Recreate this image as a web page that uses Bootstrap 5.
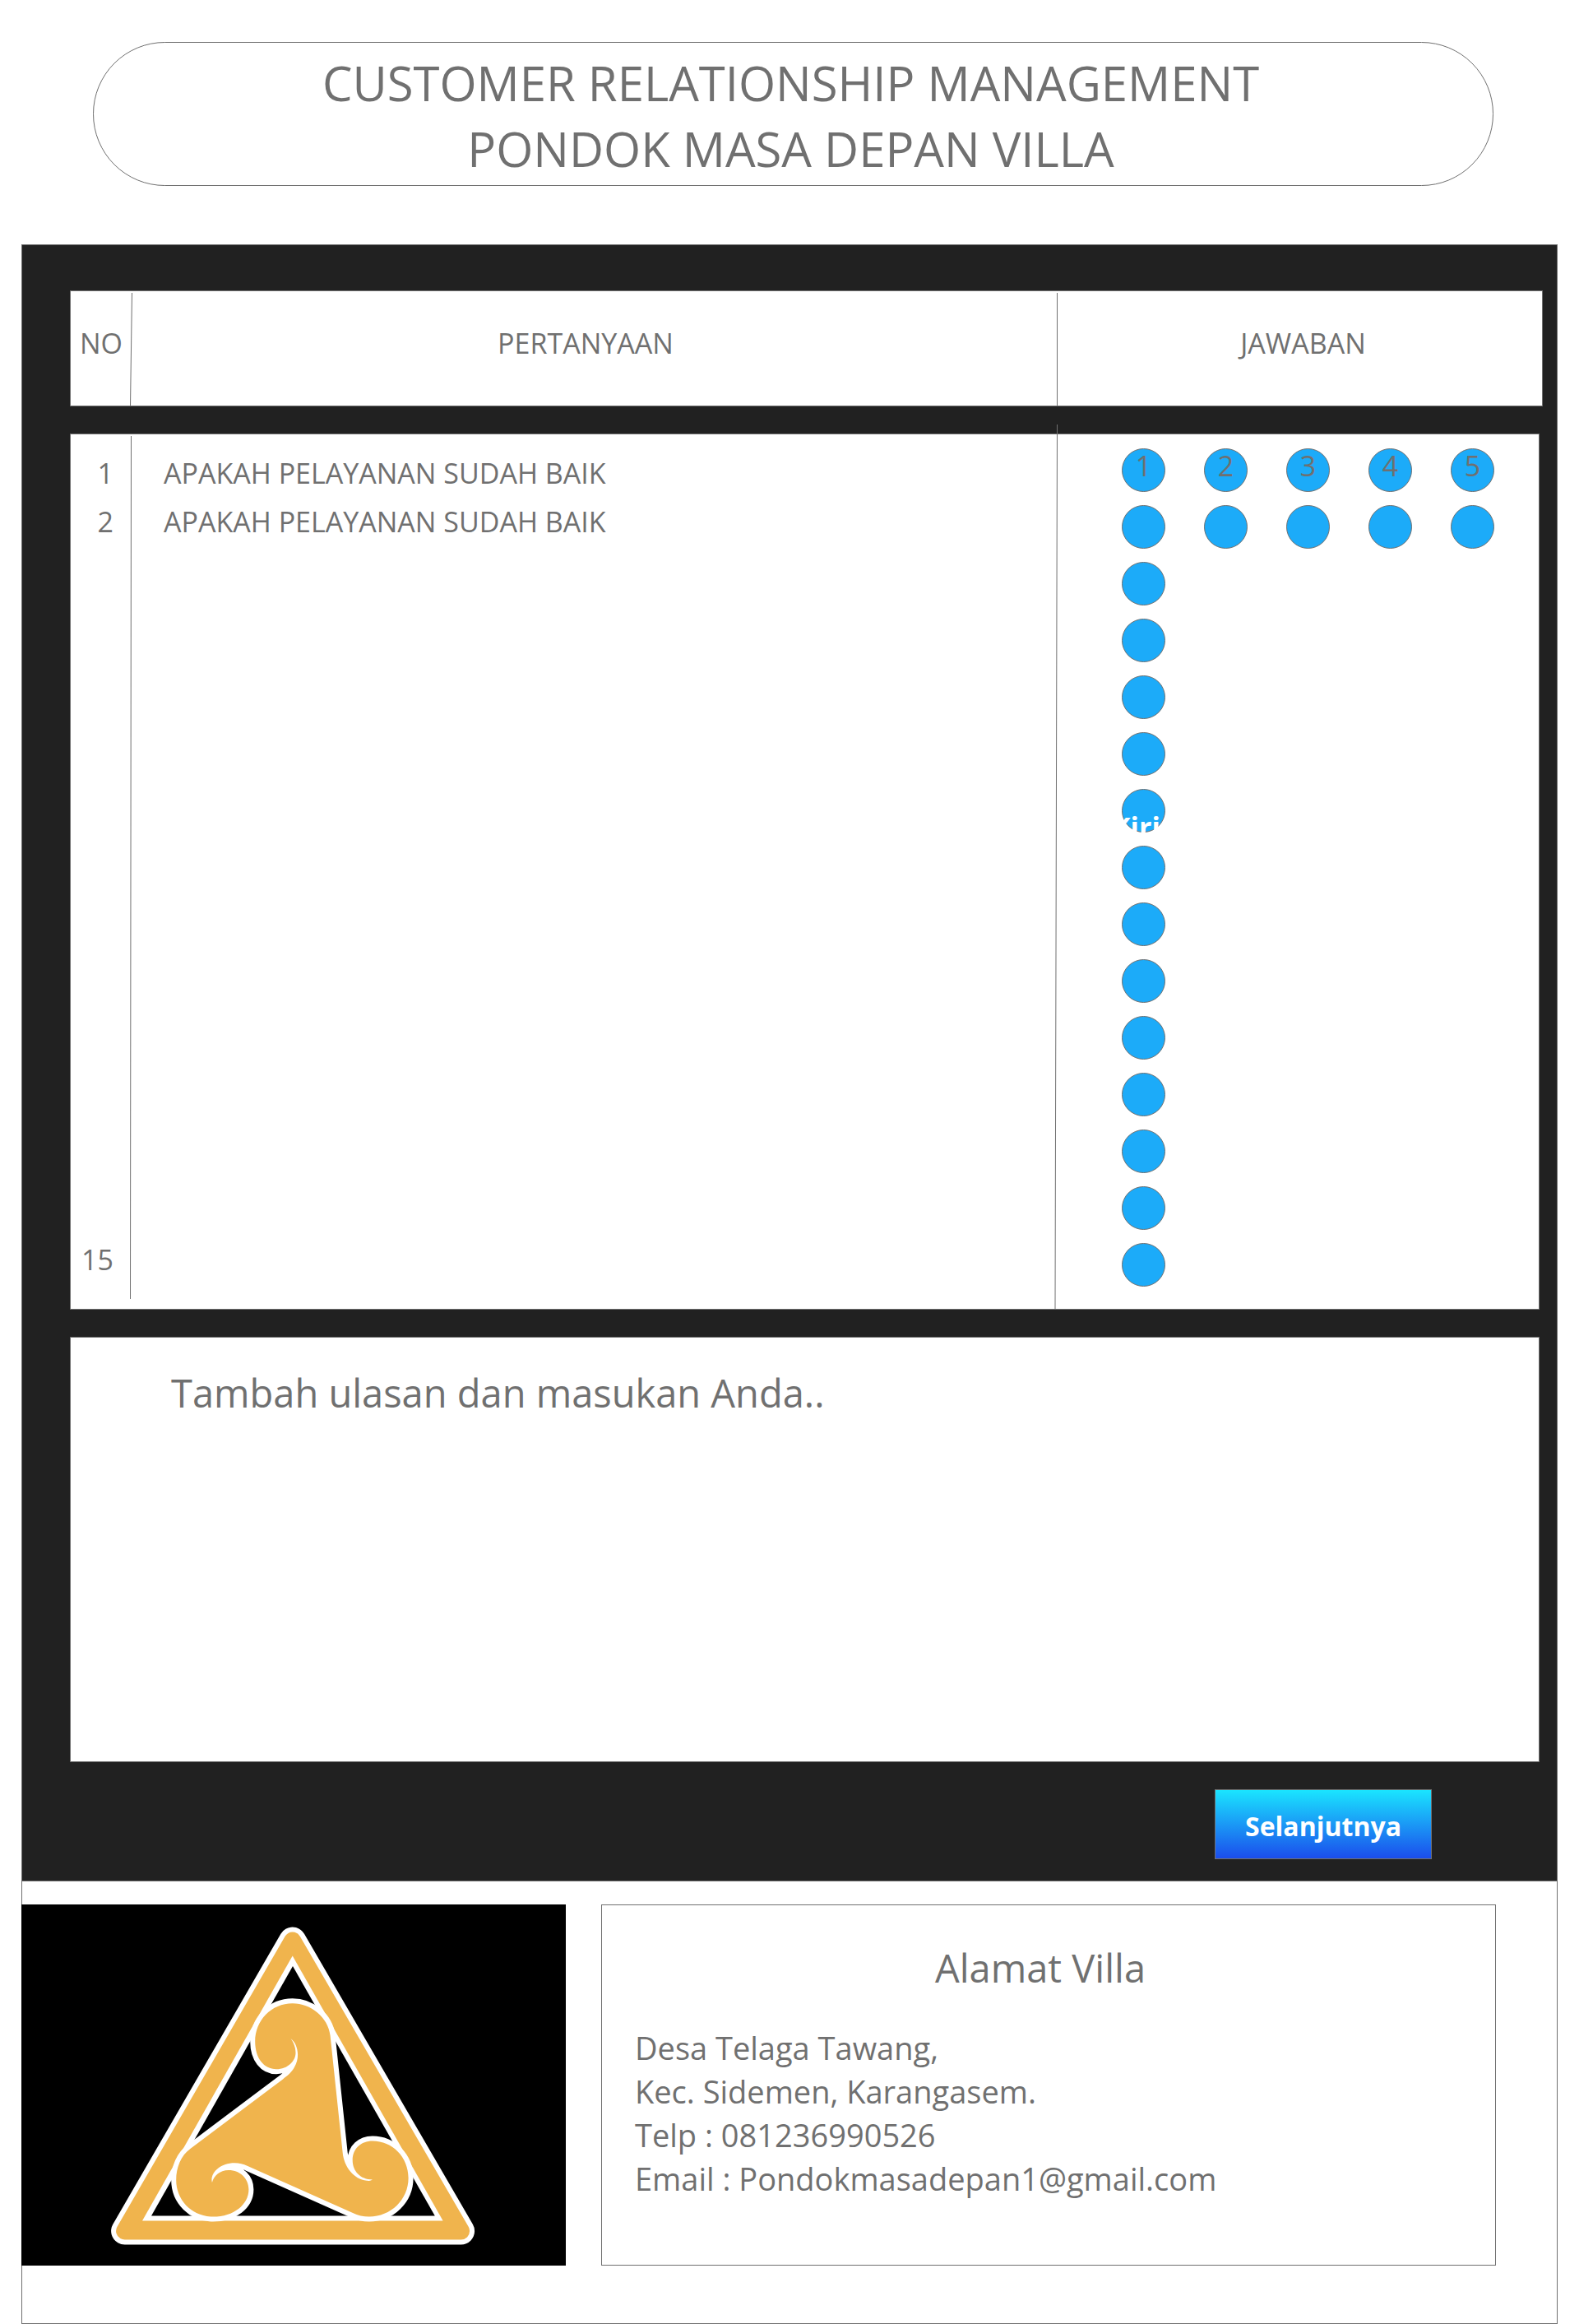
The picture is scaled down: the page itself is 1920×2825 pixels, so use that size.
<!DOCTYPE html>
<html lang="id">
<head>
<meta charset="utf-8">
<meta name="viewport" content="width=device-width, initial-scale=1">
<title>Customer Relationship Management - Pondok Masa Depan Villa</title>
<link rel="stylesheet" href="https://cdn.jsdelivr.net/npm/bootstrap@5.3.0/dist/css/bootstrap.min.css">
<style>
  :root { --ink: #707070; --panel: #212121; --dot: #1cabf9; }
  body { font-family: "Open Sans", "Noto Sans", sans-serif; font-size: 34px; line-height: 59px; color: var(--ink); }
  .line { border: 1px solid var(--ink); }

  .page-title { margin: 51px 104px 71px 113px; padding: 9px 6px 4px 0; border-radius: 88px; }
  .page-title h1 { font-size: 58px; line-height: 80px; font-weight: 400; }

  .sheet { margin: 0 26px; }
  .survey { background: var(--panel); padding: 55px 21px 26px 58px; gap: 33px; }
  .panel-grid { display: grid; grid-template-columns: 74px minmax(0, 1fr) 585px; }
  .panel-head { grid-template-columns: 74px minmax(0, 1fr) 589px; margin-right: -4px; height: 141px; }
  .panel-head > div { padding-bottom: 12px; }
  .panel-head .head-question { padding-right: 22px; }
  .panel-head .head-answer { padding-left: 8px; }
  .panel-body { min-height: 1065px; }
  .rule-right { position: relative; }
  .rule { position: absolute; top: 2px; right: -1px; width: 4px; height: calc(100% - 2px); overflow: visible; }
  .rule-short { height: calc(100% - 14px); }
  .rule-tall { top: -12px; height: calc(100% + 12px); }
  .rule line { stroke: var(--ink); stroke-width: 1px; }
  .numbers { padding: 18px 22px 30px 0; }
  .questions { padding: 18px 0 0 39px; }

  .answers { padding: 17px 0 27px 78px; row-gap: 16px; }
  .scale-row { gap: 47px; }
  .choice { position: relative; display: grid; width: 53px; height: 53px; }
  .choice input, .choice span { grid-area: 1 / 1; }
  .choice input { appearance: none; width: 53px; height: 53px; margin: 0; border: 1px solid var(--ink); border-radius: 50%; background: var(--dot); }
  .choice input:checked { background: #1b4dec; }
  .choice span { z-index: 1; place-self: center; padding-bottom: 12px; line-height: 40px; pointer-events: none; }
  .choice .send-tag { position: absolute; top: 26px; left: -12px; padding: 0; color: #fff; font-size: 34px; font-weight: 700; }

  .review { display: block; width: 100%; height: 517px; padding: 35px 40px 35px 122px; font-size: 47px; line-height: 64px; color: var(--ink); resize: none; background: #fff; border-radius: 0; }
  .review::placeholder { color: var(--ink); opacity: 1; }
  .btn-next { width: 264px; height: 85px; margin-right: 131px; padding: 4px 0 0; border: 1px solid var(--ink); border-radius: 0; color: #fff; font-size: 32px; font-weight: 700; line-height: 40px; background: linear-gradient(#1ae5ff, #1b4dec); }
  .btn-next:hover { color: #fff; }

  .foot { padding: 28px 74px 70px 0; gap: 43px; border-top: 0; }
  .villa-logo { flex: 0 1 662px; height: 439px; margin-left: -1px; background: #000; }
  .contact { padding: 44px 60px 20px 40px; font-size: 38px; line-height: 53px; }
  .contact h2 { font-size: 47px; line-height: 64px; font-weight: 400; margin-bottom: 39px; }
</style>
<script src="https://cdn.jsdelivr.net/npm/bootstrap@5.3.0/dist/js/bootstrap.bundle.min.js"></script>
</head>
<body class="bg-white">

<header class="page-title line text-center">
  <h1 class="mb-0">CUSTOMER RELATIONSHIP MANAGEMENT<br>PONDOK MASA DEPAN VILLA</h1>
</header>

<main class="sheet">
  <form class="survey line d-flex flex-column">
    <div class="panel-grid panel-head line bg-white text-center">
      <div class="rule-right d-flex align-items-center justify-content-center">NO
        <svg class="rule" viewBox="0 0 4 100" preserveAspectRatio="none" aria-hidden="true"><line x1="3.5" y1="0" x2="1.5" y2="100" vector-effect="non-scaling-stroke"/></svg>
      </div>
      <div class="head-question rule-right d-flex align-items-center justify-content-center">PERTANYAAN
        <svg class="rule" viewBox="0 0 4 100" preserveAspectRatio="none" aria-hidden="true"><line x1="2.5" y1="0" x2="2.5" y2="100" vector-effect="non-scaling-stroke"/></svg>
      </div>
      <div class="head-answer d-flex align-items-center justify-content-center">JAWABAN</div>
    </div>

    <div class="panel-grid panel-body line bg-white">
      <div class="numbers rule-right d-flex flex-column text-end">
        <div>1</div>
        <div>2</div>
        <div class="mt-auto">15</div>
        <svg class="rule rule-short" viewBox="0 0 4 100" preserveAspectRatio="none" aria-hidden="true"><line x1="2.5" y1="0" x2="1.5" y2="100" vector-effect="non-scaling-stroke"/></svg>
      </div>
      <div class="questions rule-right">
        <div id="q1">APAKAH PELAYANAN SUDAH BAIK</div>
        <div id="q2">APAKAH PELAYANAN SUDAH BAIK</div>
        <svg class="rule rule-tall" viewBox="0 0 4 100" preserveAspectRatio="none" aria-hidden="true"><line x1="2.5" y1="0" x2="0" y2="100" vector-effect="non-scaling-stroke"/></svg>
      </div>
      <div class="answers d-flex flex-column">
        <div class="scale-row d-flex" role="radiogroup" aria-labelledby="q1">
          <label class="choice"><input type="radio" name="a1" value="1"><span>1</span></label>
          <label class="choice"><input type="radio" name="a1" value="2"><span>2</span></label>
          <label class="choice"><input type="radio" name="a1" value="3"><span>3</span></label>
          <label class="choice"><input type="radio" name="a1" value="4"><span>4</span></label>
          <label class="choice"><input type="radio" name="a1" value="5"><span>5</span></label>
        </div>
        <div class="scale-row d-flex" role="radiogroup" aria-labelledby="q2">
          <label class="choice"><input type="radio" name="a2" value="1" aria-label="1"></label>
          <label class="choice"><input type="radio" name="a2" value="2" aria-label="2"></label>
          <label class="choice"><input type="radio" name="a2" value="3" aria-label="3"></label>
          <label class="choice"><input type="radio" name="a2" value="4" aria-label="4"></label>
          <label class="choice"><input type="radio" name="a2" value="5" aria-label="5"></label>
        </div>
        <label class="choice"><input type="radio" name="a3" aria-label="1"></label>
        <label class="choice"><input type="radio" name="a4" aria-label="1"></label>
        <label class="choice"><input type="radio" name="a5" aria-label="1"></label>
        <label class="choice"><input type="radio" name="a6" aria-label="1"></label>
        <label class="choice"><input type="radio" name="a7" aria-label="1"><span class="send-tag">Kirim</span></label>
        <label class="choice"><input type="radio" name="a8" aria-label="1"></label>
        <label class="choice"><input type="radio" name="a9" aria-label="1"></label>
        <label class="choice"><input type="radio" name="a10" aria-label="1"></label>
        <label class="choice"><input type="radio" name="a11" aria-label="1"></label>
        <label class="choice"><input type="radio" name="a12" aria-label="1"></label>
        <label class="choice"><input type="radio" name="a13" aria-label="1"></label>
        <label class="choice"><input type="radio" name="a14" aria-label="1"></label>
        <label class="choice"><input type="radio" name="a15" aria-label="1"></label>
      </div>
    </div>

    <textarea class="review line" aria-label="Ulasan dan masukan" placeholder="Tambah ulasan dan masukan Anda.."></textarea>

    <button type="button" class="btn btn-next align-self-end">Selanjutnya</button>
  </form>

  <footer class="foot line d-flex">
    <svg class="villa-logo" viewBox="0 0 662 439" role="img" aria-label="Logo Pondok Masa Depan Villa">
      <g stroke-linejoin="round">
        <path d="M329.7 44 125.6 397H534.6Z" fill="#fff" stroke="#fff" stroke-width="33"/>
        <path d="M329.7 44 125.6 397H534.6Z" fill="#f0b44d" stroke="#f0b44d" stroke-width="21"/>
      </g>
      <path d="M329.7 62.5 147 384.4H512.6Z" fill="#fff"/>
      <path d="M330 75 158 378.5H502.8Z" fill="#000"/>
      <path fill="#f0b44d" stroke="#fff" stroke-width="12" paint-order="stroke" d="M329.7 120.3C304 120.3 284.2 141 284.2 166.5C284.2 187 295 200.2 310 200.2C324 200.2 333.5 190 333.5 180.4C333.5 173 330.5 167 327.4 163C335 168 340 184 332 197.8C329 204 323 208.5 318 212.4L205.7 296.8C194 305 188.2 320 188.2 335C188.2 360 208 379.6 233.2 379.6C258 379.6 276.4 365 276.4 346.5C276.4 333 266 322.9 252 322.9C241 322.9 234 330 231.9 337.9C229 327 241 314.2 259.4 314.2C265 314.2 270 315.5 274.6 317.7L403 375C409 378 416 379.6 422.9 379.6C449 379.6 470.6 359 470.6 332.6C470.6 307 451 287.5 427 287.5C413 287.5 402.7 297 402.7 310.7C402.7 324 412 334.4 427 334.4C424 336 422 336 420 335.8C404 334 392.5 319 390.7 302L375.6 159.5C373 137 352 120.3 329.7 120.3Z"/>
    </svg>
    <address class="contact line flex-grow-1 mb-0">
      <h2 class="text-center">Alamat Villa</h2>
      <div>Desa Telaga Tawang,</div>
      <div>Kec. Sidemen, Karangasem.</div>
      <div>Telp : 081236990526</div>
      <div>Email : Pondokmasadepan1@gmail.com</div>
    </address>
  </footer>
</main>
</body>
</html>
